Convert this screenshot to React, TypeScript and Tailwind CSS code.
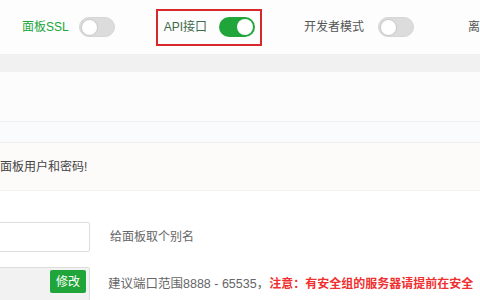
const FONT = "font-['Liberation_Sans','Noto_Sans_CJK_SC',sans-serif]";

function Toggle({ on }: { on?: boolean }) {
  return on ? (
    <div className="flex h-[20px] w-[36px] shrink-0 items-center justify-end rounded-full bg-[#20a53a] pr-[2px]">
      <div className="h-[16px] w-[16px] rounded-full bg-white" />
    </div>
  ) : (
    <div className="flex h-[20px] w-[36px] shrink-0 items-center rounded-full border border-[#d6d6d6] bg-[#dcdcdc] pl-[1px]">
      <div className="h-[17px] w-[17px] rounded-full border border-[#c8c8c8] bg-white" />
    </div>
  );
}

export default function App() {
  return (
    <div className={`${FONT} h-[300px] w-[480px] overflow-hidden bg-white text-[12px]`}>
      {/* 顶部开关 */}
      <div className="flex h-[54px] items-center whitespace-nowrap bg-[#fdfdfd] pl-[22px]">
        <span className="shrink-0 text-[#20a53a]">面板SSL</span>
        <div className="ml-[10px] shrink-0">
          <Toggle />
        </div>
        <div className="ml-[41px] flex h-[37px] shrink-0 items-center border-2 border-[#d8282e] pl-[6px] pr-[5px]">
          <span className="text-[#3f6b4c]">API接口</span>
          <div className="ml-[12px]">
            <Toggle on />
          </div>
        </div>
        <span className="ml-[42px] shrink-0 text-[#555]">开发者模式</span>
        <div className="ml-[14px] shrink-0">
          <Toggle />
        </div>
        <span className="ml-[54px] shrink-0 text-[#555]">离</span>
      </div>

      <div className="h-[18px] bg-[#f1f1f1]" />
      <div className="h-[50px] border-b border-[#eeeeee] bg-[#fcfcfc]" />
      <div className="h-[21px] border-b border-[#eeeeee] bg-[#fafbfc]" />
      <div className="flex h-[47px] items-center bg-[#fdfafa]">
        <span className="whitespace-nowrap text-[12px] text-[#444]">面板用户和密码!</span>
      </div>

      {/* 表单 */}
      <div className="border-t border-[#f3f3f3] pt-[31px]">
        <div className="flex items-center whitespace-nowrap">
          <div className="ml-[-4px] h-[30px] w-[94px] shrink-0 rounded-[2px] border border-[#dddddd] bg-white" />
          <span className="ml-[20px] shrink-0 text-[#666]">给面板取个别名</span>
        </div>
        <div className="mt-[15px] flex items-center whitespace-nowrap">
          <div className="ml-[-4px] flex h-[34px] w-[94px] shrink-0 items-start justify-end rounded-[2px] border border-[#dddddd] bg-[#f2f2f2] pr-[3px] pt-[2px]">
            <button className="h-[23px] w-[36px] rounded-[2px] bg-[#20a53a] text-[12px] text-white">修改</button>
          </div>
          <span className="ml-[18px] shrink-0 text-[12.5px] text-[#666]">
            建议端口范围8888 - 65535，
            <span className="text-[12px] font-bold text-[#f03030]">注意：有安全组的服务器请提前在安全</span>
          </span>
        </div>
      </div>
    </div>
  );
}
